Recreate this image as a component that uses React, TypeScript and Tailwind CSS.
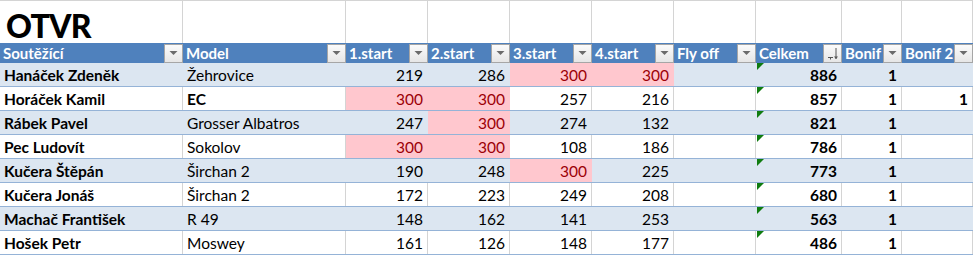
import React from 'react';

type Row = {
  name: string;
  model: string;
  modelBold?: boolean;
  starts: number[];
  pink: boolean[];
  total: number;
  bonif: number;
  bonif2?: number;
};

const rows: Row[] = [
  { name: 'Hanáček Zdeněk', model: 'Žehrovice', starts: [219, 286, 300, 300], pink: [false, false, true, true], total: 886, bonif: 1 },
  { name: 'Horáček Kamil', model: 'EC', modelBold: true, starts: [300, 300, 257, 216], pink: [true, true, false, false], total: 857, bonif: 1, bonif2: 1 },
  { name: 'Rábek Pavel', model: 'Grosser Albatros', starts: [247, 300, 274, 132], pink: [false, true, false, false], total: 821, bonif: 1 },
  { name: 'Pec Ludovít', model: 'Sokolov', starts: [300, 300, 108, 186], pink: [true, true, false, false], total: 786, bonif: 1 },
  { name: 'Kučera Štěpán', model: 'Širchan 2', starts: [190, 248, 300, 225], pink: [false, false, true, false], total: 773, bonif: 1 },
  { name: 'Kučera Jonáš', model: 'Širchan 2', starts: [172, 223, 249, 208], pink: [false, false, false, false], total: 680, bonif: 1 },
  { name: 'Machač František', model: 'R 49', starts: [148, 162, 141, 253], pink: [false, false, false, false], total: 563, bonif: 1 },
  { name: 'Hošek Petr', model: 'Moswey', starts: [161, 126, 148, 177], pink: [false, false, false, false], total: 486, bonif: 1 },
];

const headers = ['Soutěžící', 'Model', '1.start', '2.start', '3.start', '4.start', 'Fly off', 'Celkem', 'Bonif', 'Bonif 2'];

const cols = 'grid grid-cols-[183px_163px_82px_82px_82px_82px_82px_86px_60px_71px]';

const FilterButton = ({ sort }: { sort?: boolean }) => (
  <div className="ml-auto flex h-[19px] w-[19px] shrink-0 items-center justify-center border border-[#a6a6a6] bg-gradient-to-b from-[#fbfbfb] to-[#e6e6e6]">
    {sort ? (
      <svg width="15" height="15" viewBox="0 0 15 15">
        <path d="M3 11.5h5M5.5 11.5v2" stroke="#555" strokeWidth="1" fill="none" />
        <path d="M11 2v11" stroke="#555" strokeWidth="1" fill="none" />
        <path d="M9 10.5l2 2.5 2-2.5z" fill="#555" />
      </svg>
    ) : (
      <svg width="9" height="6" viewBox="0 0 9 6">
        <path d="M0.5 1h8L4.5 5z" fill="#6b6b6b" />
      </svg>
    )}
  </div>
);

const GreenCorner = () => (
  <div className="absolute left-[1px] top-0 h-0 w-0 border-l-[7px] border-b-[7px] border-l-[#107c10] border-b-transparent" />
);

export default function App() {
  return (
    <div className="h-[256px] w-[973px] overflow-hidden bg-white text-[15.5px] text-black" style={{ fontFamily: 'Lato, "Liberation Sans", sans-serif' }}>
      {/* title row */}
      <div className={`${cols} h-[43px] border-t border-[#d4d4d4]`}>
        <div className="flex items-end border-r border-[#d4d4d4] pb-[1px] pl-[6px]">
          <span className="text-[32px] font-black leading-none tracking-tight">OTVR</span>
        </div>
        {headers.slice(1).map((h) => (
          <div key={h} className="border-r border-[#d4d4d4]" />
        ))}
      </div>

      {/* header row */}
      <div className={`${cols} h-[20px] bg-[#4f81bd]`}>
        {headers.map((h, i) => (
          <div key={h} className="flex items-center overflow-hidden pl-[3px] text-[15px] font-bold leading-[20px] text-white">
            <span className="whitespace-nowrap">{h}</span>
            <FilterButton sort={i === 7} />
          </div>
        ))}
      </div>

      {/* data rows */}
      {rows.map((r, ri) => {
        const band = ri % 2 === 0;
        const bg = band ? 'bg-[#dce6f1]' : 'bg-white';
        const line = band ? 'border-[#dce6f1]' : 'border-[#d4d4d4]';
        const cell = `flex h-full items-end border-r pb-[2px] leading-[18px] ${line}`;
        return (
          <div key={r.name} className={`${cols} h-[24px] border-b border-[#95b3d7] ${bg}`}>
            <div className={`${cell} pl-[4px] font-bold`}>{r.name}</div>
            <div className={`${cell} pl-[4px] ${r.modelBold ? 'font-bold' : ''}`}>{r.model}</div>
            {r.starts.map((s, si) => (
              <div
                key={si}
                className={`flex h-full items-end justify-end border-r pb-[2px] pr-[4px] leading-[18px] ${
                  r.pink[si] ? 'border-[#ffc7ce] bg-[#ffc7ce] text-[#9c0006]' : line
                }`}
              >
                {s}
              </div>
            ))}
            <div className={cell} />
            <div className={`${cell} relative justify-end pr-[4px] font-bold`}>
              <GreenCorner />
              {r.total}
            </div>
            <div className={`${cell} justify-end pr-[4px] font-bold`}>{r.bonif}</div>
            <div className={`${cell} justify-end pr-[4px] font-bold`}>{r.bonif2 ?? ''}</div>
          </div>
        );
      })}
    </div>
  );
}
